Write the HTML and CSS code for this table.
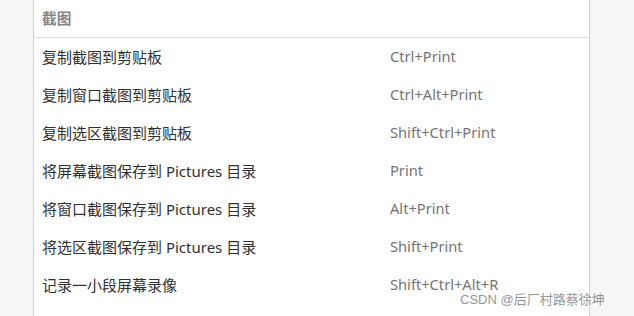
FILE: index.html
```html
<!DOCTYPE html>
<html lang="zh">
<head>
<meta charset="utf-8">
<link rel="stylesheet" href="styles.css">
</head>
<body>
<div class="panel">
  <div class="header">截图</div>
  <div class="rows">
    <div class="row"><span class="label">复制截图到剪贴板</span><span class="key">Ctrl+Print</span></div>
    <div class="row"><span class="label">复制窗口截图到剪贴板</span><span class="key">Ctrl+Alt+Print</span></div>
    <div class="row"><span class="label">复制选区截图到剪贴板</span><span class="key">Shift+Ctrl+Print</span></div>
    <div class="row"><span class="label">将屏幕截图保存到 Pictures 目录</span><span class="key">Print</span></div>
    <div class="row"><span class="label">将窗口截图保存到 Pictures 目录</span><span class="key">Alt+Print</span></div>
    <div class="row"><span class="label">将选区截图保存到 Pictures 目录</span><span class="key">Shift+Print</span></div>
    <div class="row"><span class="label">记录一小段屏幕录像</span><span class="key">Shift+Ctrl+Alt+R</span></div>
  </div>
</div>
<div class="watermark">CSDN @后厂村路蔡徐坤</div>
</body>
</html>
```
FILE: styles.css
```css
html, body {
  margin: 0;
  padding: 0;
  height: 100%;
}
body {
  background: #f6f6f6;
  font-family: "Noto Sans", "Noto Sans CJK SC", sans-serif;
  font-size: 14.67px;
  overflow: hidden;
  position: relative;
}
.panel {
  margin-left: 33px;
  width: 555px;
  height: 100%;
  background: #ffffff;
  border-left: 1px solid #cfcfcf;
  border-right: 1px solid #cfcfcf;
}
.header {
  height: 38px;
  box-sizing: border-box;
  padding: 0 8px 2px;
  display: flex;
  align-items: center;
  border-bottom: 1px solid #dedede;
  color: #858585;
  font-weight: bold;
  font-family: "Noto Sans CJK SC", sans-serif;
}
.row {
  height: 38px;
  box-sizing: border-box;
  display: grid;
  grid-template-columns: 348px 1fr;
  align-items: center;
  padding: 0 0 2px 8px;
}
.label {
  color: #303030;
  font-family: "Noto Sans", "Noto Sans CJK SC", sans-serif;
  font-size: 15px;
}
.key {
  color: #747474;
  font-family: "Noto Sans", sans-serif;
  font-size: 14.67px;
}
.watermark {
  position: absolute;
  left: 460px;
  top: 289px;
  font-family: "Liberation Sans", "Noto Sans CJK SC", sans-serif;
  font-size: 13px;
  color: rgba(110, 110, 110, 0.75);
  white-space: nowrap;
}
```
